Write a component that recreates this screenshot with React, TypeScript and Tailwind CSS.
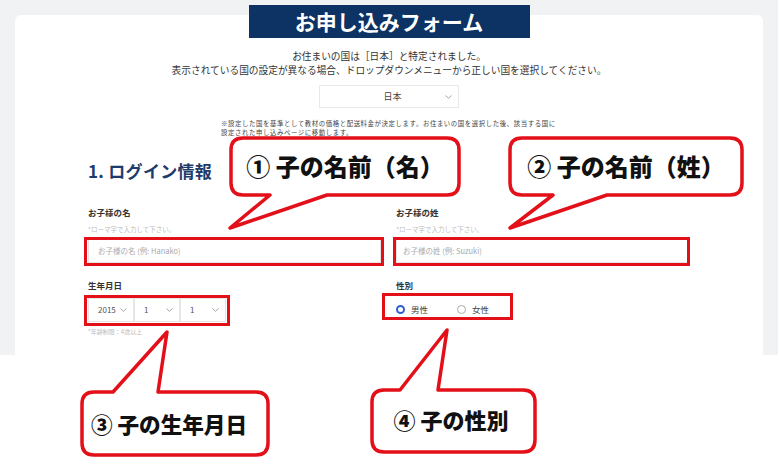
import React from "react";

const FONT = '"Noto Sans CJK JP", "Noto Sans", sans-serif';

function Chevron({ className = "" }: { className?: string }) {
  return (
    <svg width="7" height="4" viewBox="0 0 7 4" className={className}>
      <path d="M0.5 0.5 L3.5 3.3 L6.5 0.5" fill="none" stroke="#9a9a9a" strokeWidth="0.9" />
    </svg>
  );
}

function SelectBox({ value, w }: { value: string; w: string }) {
  return (
    <div className={`flex h-full items-center justify-between border border-[#e6e6e6] bg-white pl-[9px] pr-[6px] ${w}`}>
      <span className="text-[8px] text-[#555]">{value}</span>
      <Chevron />
    </div>
  );
}

function Overlay() {
  const red = "#e3101a";
  return (
    <svg
      width="780"
      height="468"
      viewBox="0 0 780 468"
      className="pointer-events-none absolute left-0 top-0"
      style={{ fontFamily: FONT }}
    >
      {/* red highlight boxes */}
      <rect x="85.5" y="238.5" width="297" height="26" fill="none" stroke={red} strokeWidth="3" />
      <rect x="394.5" y="238.5" width="294" height="26" fill="none" stroke={red} strokeWidth="3" />
      <rect x="85.5" y="296.5" width="143" height="28" fill="none" stroke={red} strokeWidth="3" />
      <rect x="383.5" y="294.5" width="128" height="24" fill="none" stroke={red} strokeWidth="3" />

      {/* callout 1 */}
      <path
        d="M243 138 H447 Q459 138 459 150 V183 Q459 195 447 195 H327 L230 228 L270 195 H243 Q231 195 231 183 V150 Q231 138 243 138 Z"
        fill="#fff"
        stroke={red}
        strokeWidth="3.5"
        strokeLinejoin="round"
      />
      <text x="345" y="176" textAnchor="middle" fontSize="24" fontWeight="900" fill="#111">
        ① 子の名前（名）
      </text>

      {/* callout 2 */}
      <path
        d="M522 138 H730 Q742 138 742 150 V183 Q742 195 730 195 H607 L510 228 L553 195 H522 Q510 195 510 183 V150 Q510 138 522 138 Z"
        fill="#fff"
        stroke={red}
        strokeWidth="3.5"
        strokeLinejoin="round"
      />
      <text x="626" y="176" textAnchor="middle" fontSize="24" fontWeight="900" fill="#111">
        ② 子の名前（姓）
      </text>

      {/* callout 3 */}
      <path
        d="M94 392 H113 L167 332 L158 392 H256 Q268 392 268 404 V443 Q268 455 256 455 H94 Q82 455 82 443 V404 Q82 392 94 392 Z"
        fill="#fff"
        stroke={red}
        strokeWidth="3.5"
        strokeLinejoin="round"
      />
      <text x="169" y="433" textAnchor="middle" fontSize="21.6" fontWeight="900" fill="#111">
        ③ 子の生年月日
      </text>

      {/* callout 4 */}
      <path
        d="M384 390 H400 L447 330 L438 390 H523 Q535 390 535 402 V440 Q535 452 523 452 H384 Q372 452 372 440 V402 Q372 390 384 390 Z"
        fill="#fff"
        stroke={red}
        strokeWidth="3.5"
        strokeLinejoin="round"
      />
      <text x="451" y="429" textAnchor="middle" fontSize="22" fontWeight="900" fill="#111">
        ④ 子の性別
      </text>
    </svg>
  );
}

export default function App() {
  return (
    <div
      className="relative h-[468px] w-[780px] overflow-hidden bg-white"
      style={{ fontFamily: FONT }}
    >
      <div className="h-[355px] w-[778px] bg-[#f1f2f4] px-[15px] pt-[15px]">
        <div className="flex h-[340px] flex-col rounded-t-[6px] bg-white">
          {/* banner */}
          <div className="mx-auto -mt-[10px] flex h-[33px] w-[281px] items-center justify-center bg-[#0c3363]">
            <span className="text-[21px] font-bold leading-none text-white">
              お申し込みフォーム
            </span>
          </div>

          {/* country text */}
          <div className="mt-[11px] text-center text-[9.7px] leading-[14.1px] text-[#333]">
            <p>お住まいの国は［日本］と特定されました。</p>
            <p>表示されている国の設定が異なる場合、ドロップダウンメニューから正しい国を選択してください。</p>
          </div>

          {/* country select */}
          <div className="mx-auto mt-[8px] flex h-[23px] w-[140px] items-center border border-[#e8e8e8] bg-white">
            <span className="flex-1 pl-[20px] text-center text-[9px] text-[#444]">日本</span>
            <Chevron className="mr-[6px]" />
          </div>

          {/* note */}
          <div className="mx-auto mt-[11px] w-[336px] whitespace-nowrap text-left text-[6.4px] leading-[9.3px] tracking-[0.6px] text-[#444]">
            ※設定した国を基準として教材の価格と配送料金が決定します。お住まいの国を選択した後、該当する国に
            <br />
            設定された申し込みページに移動します。
          </div>

          {/* login section */}
          <div className="px-[73px]">
            <h2 className="mt-[23px] text-[17px] font-bold leading-[20px] tracking-[0.3px] text-[#1d3c6c]">
              1. ログイン情報
            </h2>

            <div className="mt-[25px] grid grid-cols-[293px_293px] gap-x-[15px]">
              <div>
                <div className="text-[8.5px] font-bold leading-[12px] text-[#333]">お子様の名</div>
                <div className="mt-[6px] text-[6.5px] leading-[10px] text-[#bdbdbd]">*ローマ字で入力して下さい。</div>
                <div className="mt-[4px] flex h-[25px] items-center border border-[#e4e4e4] bg-white pl-[9px] text-[7.5px] text-[#aaa]">
                  お子様の名 (例: Hanako)
                </div>
              </div>
              <div>
                <div className="text-[8.5px] font-bold leading-[12px] text-[#333]">お子様の姓</div>
                <div className="mt-[6px] text-[6.5px] leading-[10px] text-[#bdbdbd]">*ローマ字で入力して下さい。</div>
                <div className="mt-[4px] flex h-[25px] items-center border border-[#e4e4e4] bg-white pl-[6px] text-[7.5px] text-[#aaa]">
                  お子様の姓 (例: Suzuki)
                </div>
              </div>

              <div className="mt-[16px]">
                <div className="text-[8.5px] font-bold leading-[12px] text-[#333]">生年月日</div>
                <div className="mt-[7px] flex h-[24px]">
                  <SelectBox value="2015" w="w-[46px]" />
                  <SelectBox value="1" w="w-[46px]" />
                  <SelectBox value="1" w="w-[46px]" />
                </div>
                <div className="mt-[5px] text-[6px] leading-[9px] text-[#bdbdbd]">*年齢制限：4歳以上</div>
              </div>
              <div className="mt-[16px]">
                <div className="text-[8.5px] font-bold leading-[12px] text-[#333]">性別</div>
                <div className="mt-[7px] flex h-[24px] items-center text-[8.5px] text-[#444]">
                  <span className="flex items-center">
                    <span className="box-border h-[9px] w-[9px] rounded-full border-[2.5px] border-[#2d5fd0] bg-white" />
                    <span className="ml-[6px]">男性</span>
                  </span>
                  <span className="ml-[29px] flex items-center">
                    <span className="box-border h-[9px] w-[9px] rounded-full border border-[#aaa] bg-white" />
                    <span className="ml-[6px]">女性</span>
                  </span>
                </div>
              </div>
            </div>
          </div>
        </div>
      </div>

      <Overlay />
    </div>
  );
}
